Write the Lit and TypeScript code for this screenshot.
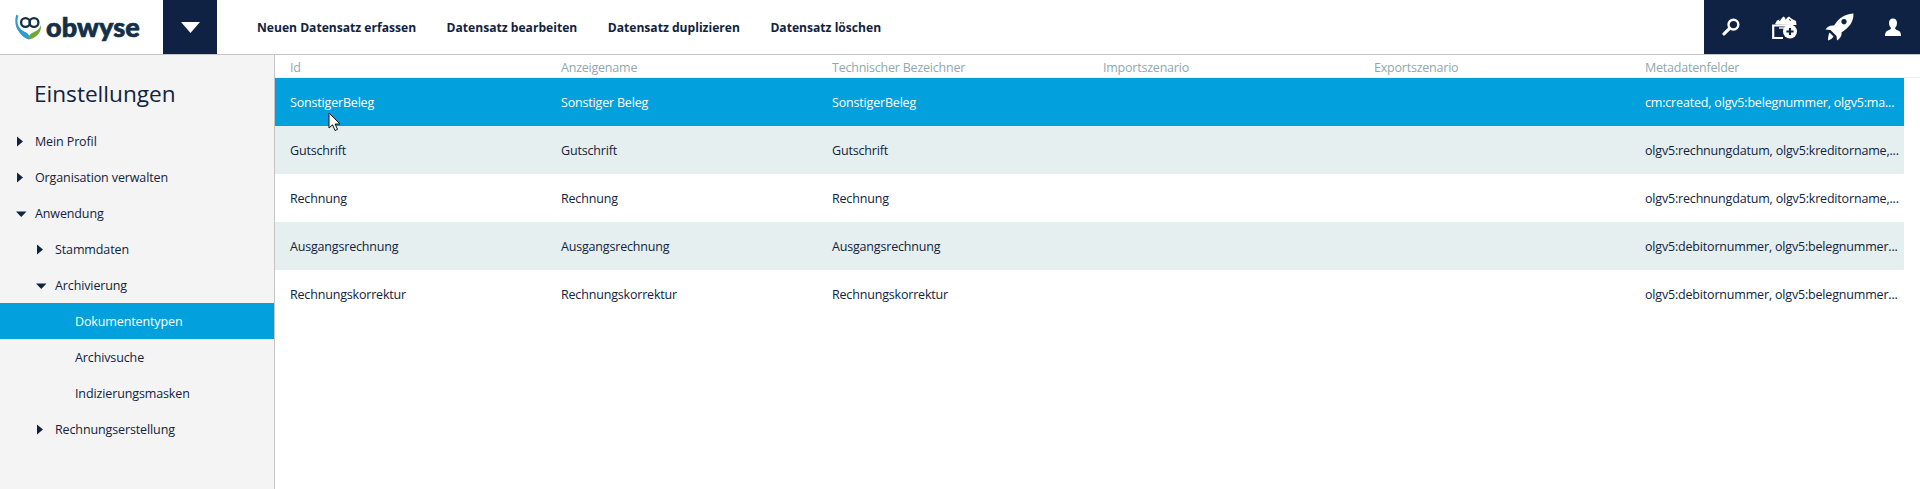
import { LitElement, html, css, svg } from "lit";
import { customElement } from "lit/decorators.js";

type NavItem = { label: string; level: number; arrow?: "right" | "down"; active?: boolean };
const NAV: NavItem[] = [
  { label: "Mein Profil", level: 0, arrow: "right" },
  { label: "Organisation verwalten", level: 0, arrow: "right" },
  { label: "Anwendung", level: 0, arrow: "down" },
  { label: "Stammdaten", level: 1, arrow: "right" },
  { label: "Archivierung", level: 1, arrow: "down" },
  { label: "Dokumententypen", level: 2, active: true },
  { label: "Archivsuche", level: 2 },
  { label: "Indizierungsmasken", level: 2 },
  { label: "Rechnungserstellung", level: 1, arrow: "right" },
];

const COLS = ["Id", "Anzeigename", "Technischer Bezeichner", "Importszenario", "Exportszenario", "Metadatenfelder"];
const ROWS: [string, string, string, string][] = [
  ["SonstigerBeleg", "Sonstiger Beleg", "SonstigerBeleg", "cm:created, olgv5:belegnummer, olgv5:ma..."],
  ["Gutschrift", "Gutschrift", "Gutschrift", "olgv5:rechnungdatum, olgv5:kreditorname,..."],
  ["Rechnung", "Rechnung", "Rechnung", "olgv5:rechnungdatum, olgv5:kreditorname,..."],
  ["Ausgangsrechnung", "Ausgangsrechnung", "Ausgangsrechnung", "olgv5:debitornummer, olgv5:belegnummer..."],
  ["Rechnungskorrektur", "Rechnungskorrektur", "Rechnungskorrektur", "olgv5:debitornummer, olgv5:belegnummer..."],
];

const arrowRight = svg`<path d="M1 0.5 L7 5.5 L1 10.5 Z" fill="#10233f"/>`;
const arrowDown = svg`<path d="M0 3.5 H10.5 L5.25 9 Z" fill="#10233f"/>`;

@customElement("app-root")
export class AppRoot extends LitElement {
  static styles = css`
    :host { display: block; width: 1920px; height: 489px; overflow: hidden; position: relative; font-family: "Open Sans", "Noto Sans", sans-serif; background: #fff; color: #10233f; }
    .header { display: flex; height: 54px; border-bottom: 1px solid #c4c4c4; align-items: stretch; }
    .logo { width: 163px; display: flex; align-items: center; padding-left: 15px; box-sizing: border-box; gap: 4px; }
    .logo svg { flex: none; }
    .logo-text { font-family: "Lato", sans-serif; font-weight: 900; font-size: 27px; letter-spacing: 0.1px; color: #143049; line-height: 1; margin-top: -2px; -webkit-text-stroke: 0.7px #143049; }
    .menu-btn { width: 54px; background: #102243; display: flex; align-items: center; justify-content: center; }
    .actions { display: flex; flex: 1; align-items: center; padding-left: 40px; gap: 30.5px; font-weight: 700; font-size: 12.1px; color: #10233f; }
    .tools { width: 216px; background: #102243; display: grid; grid-template-columns: repeat(4, 1fr); align-items: center; justify-items: center; }
    .main { display: flex; height: 434px; }
    .side { width: 274px; flex: none; background: #f4f4f4; border-right: 1px solid #c4c4c4; }
    .title { font-size: 22.6px; line-height: 32px; padding: 23px 0 0 34px; height: 68px; box-sizing: border-box; color: #10233f; }
    .nav-item { display: flex; height: 36px; align-items: center; font-size: 12.5px; letter-spacing: -0.12px; color: #10233f; position: relative; }
    .nav-item svg { position: absolute; top: 13px; }
    .nav-item.active { background: #02a0dd; color: #fff; }
    .lv0 { padding-left: 35px; }
    .lv1 { padding-left: 55px; }
    .lv2 { padding-left: 75px; }
    .lv0 svg { left: 16px; }
    .lv1 svg { left: 36px; }
    .table { flex: 1; }
    .thead, .row { display: grid; grid-template-columns: repeat(5, 271px) 274px; }
    .thead { height: 23px; box-sizing: border-box; padding-top: 2px; border-bottom: 1px solid #f0f0f0; align-items: center; font-size: 12.5px; letter-spacing: -0.22px; color: #8fa9ad; }
    .row { width: 1629px; height: 48px; align-items: center; font-size: 12.5px; letter-spacing: -0.18px; color: #10233f; }
    .row.alt { background: #e6eff0; }
    .row.sel { background: #02a0dd; color: #fff; }
    .cell { padding-left: 15px; white-space: nowrap; }
    .cursor { position: absolute; left: 328px; top: 112px; }
  `;

  private searchIcon() {
    return html`<svg width="18" height="18" viewBox="0 0 18 18"><circle cx="11.4" cy="6.6" r="4.9" fill="none" stroke="#fff" stroke-width="2.4"/><path d="M7.6 10.4 L2 15.8" stroke="#fff" stroke-width="3.2" stroke-linecap="round"/></svg>`;
  }
  private boxIcon() {
    return html`<svg width="26" height="23" viewBox="0 0 26 23">
      <path d="M3 8 L5 4.5 L9 3 L11.5 0.5 L14 2.5 L17 0.5 L20 3 L24 5 L24.5 9 H20 L4 8.5 Z" fill="#fff"/>
      <path d="M7 4.5 L9 3.5 M13 3 L14.5 2.5 M17 3.5 L19 4.5" stroke="#102243" stroke-width="1"/>
      <path d="M1.2 9.5 H17 M1.2 8.5 V22 H11" fill="none" stroke="#fff" stroke-width="2.2"/>
      <path d="M7 12 H13" stroke="#fff" stroke-width="1.4"/>
      <circle cx="18" cy="15.5" r="7" fill="#fff"/>
      <path d="M14.4 15.5 H21.6 M18 11.9 V19.1" stroke="#102243" stroke-width="2.2"/>
    </svg>`;
  }
  private rocketIcon() {
    return html`<svg width="29" height="28" viewBox="0 0 29 28">
      <path fill="#fff" fill-rule="evenodd" d="M28.5 0.5 C22 1 16 3.5 12 8.5 L9 12.5 C5.5 12 2.5 13.5 0.5 16.5 L5.5 17 L11.5 23 L12 27.5 C15 25.5 17 23 16.5 19.5 L20.5 16.5 C25.5 12.5 28.5 8 28.5 0.5 Z M19 6 a2.7 2.7 0 1 0 0.01 0 Z"/>
      <path fill="#fff" d="M4.5 19.5 L8.5 23.5 C7.5 25.5 5.5 26.5 3 27.5 C3 24.5 3.5 21.5 4.5 19.5 Z"/>
    </svg>`;
  }
  private userIcon() {
    return html`<svg width="16" height="19" viewBox="0 0 16 19"><path fill="#fff" d="M8 0.5 C10.6 0.5 12 2.4 12 5 C12 7.2 11 9 10 10 C10 11.5 12 12 14 13 C15.5 14 16 15.5 16 18 H0 C0 15.5 0.5 14 2 13 C4 12 6 11.5 6 10 C5 9 4 7.2 4 5 C4 2.4 5.4 0.5 8 0.5 Z"/></svg>`;
  }
  private logoMark() {
    return html`<svg width="27" height="26" viewBox="0 0 27 26">
      <path fill="#2e9bd3" d="M1.5 0.5 C-0.5 5 0 12 3 16.5 C6 21 9 23.5 13.5 25.5 C15 23 14 20 11 18.5 C7 16.5 3 14 2.5 8 C2.3 5.5 2.8 3.5 3.5 2 Z"/>
      <path fill="#2e9bd3" d="M3 14 C6 17 10 17.5 13 20 C14 22 13.5 24 13 25 C8 23.5 5 19 3 14 Z"/>
      <path fill="#6fa63c" d="M26 10.5 C26.5 16 24 20.5 20 23 C18 24.3 15.5 25.5 13.5 25.5 C13 22 15 20 18 18.5 C21.5 17 25 15 26 10.5 Z"/>
      <g fill="none" stroke="#143049" stroke-width="2.3">
        <circle cx="10.5" cy="8.5" r="4.4"/><circle cx="19" cy="8.5" r="4.4"/>
      </g>
    </svg>`;
  }

  render() {
    return html`
      <div class="header">
        <div class="logo">${this.logoMark()}<span class="logo-text">obwyse</span></div>
        <div class="menu-btn"><svg width="19" height="11" viewBox="0 0 19 11"><path d="M0 0 H19 L9.5 11 Z" fill="#fff"/></svg></div>
        <div class="actions">
          <span>Neuen Datensatz erfassen</span><span>Datensatz bearbeiten</span><span>Datensatz duplizieren</span><span>Datensatz löschen</span>
        </div>
        <div class="tools">
          ${this.searchIcon()}${this.boxIcon()}${this.rocketIcon()}${this.userIcon()}
        </div>
      </div>
      <div class="main">
        <div class="side">
          <div class="title">Einstellungen</div>
          ${NAV.map(
            (n) => html`<div class="nav-item lv${n.level} ${n.active ? "active" : ""}">
              ${n.arrow
                ? html`<svg width="11" height="11" viewBox="0 0 11 11">${n.arrow === "right" ? arrowRight : arrowDown}</svg>`
                : ""}
              <span>${n.label}</span>
            </div>`
          )}
        </div>
        <div class="table">
          <div class="thead">${COLS.map((c) => html`<div class="cell">${c}</div>`)}</div>
          ${ROWS.map(
            (r, i) => html`<div class="row ${i === 0 ? "sel" : i % 2 === 1 ? "alt" : ""}">
              <div class="cell">${r[0]}</div><div class="cell">${r[1]}</div><div class="cell">${r[2]}</div>
              <div class="cell"></div><div class="cell"></div><div class="cell">${r[3]}</div>
            </div>`
          )}
        </div>
      </div>
      <svg class="cursor" width="14" height="21" viewBox="0 0 14 21"><path d="M1 1 V16 L4.6 12.8 L7 18.5 L9.5 17.4 L7.1 12 H12 Z" fill="#fff" stroke="#111" stroke-width="1"/></svg>
    `;
  }
}
